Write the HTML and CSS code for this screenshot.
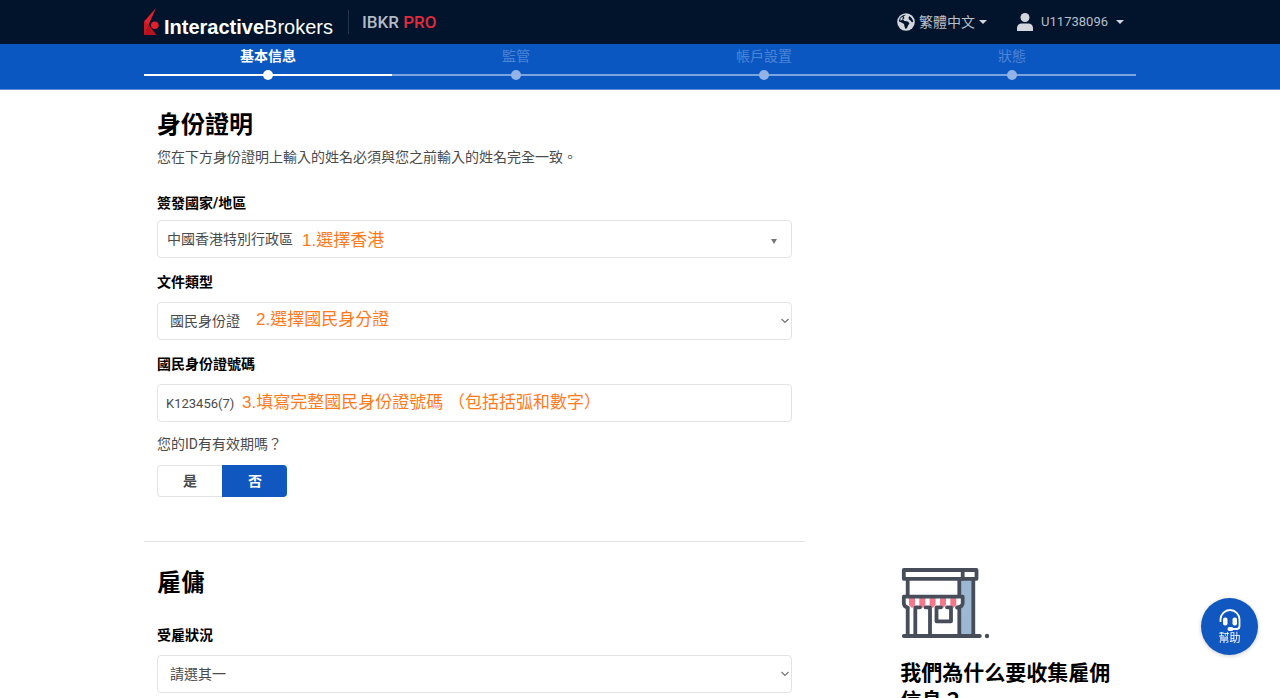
FILE: index.html
```html
<!DOCTYPE html>
<html lang="zh-Hant">
<head>
<meta charset="utf-8">
<title>InteractiveBrokers</title>
<link rel="stylesheet" href="styles.css">
</head>
<body>
<header class="topbar">
  <div class="container topbar-row">
    <a class="brand" href="#">
      <svg class="brand-mark" viewBox="0 0 16 28" aria-hidden="true">
        <path d="M12 0L0 13.500V27L4.500 17z" fill="#e3202c"/>
        <path d="M0 27L5 17L12.500 27z" fill="#b8121e"/>
        <path d="M0 13.500L5 17L0 27z" fill="#cb1823"/>
        <circle cx="10.800" cy="17.200" r="3.800" fill="#e3202c"/>
      </svg>
      <span class="brand-name"><b>Interactive</b>Brokers</span>
    </a>
    <span class="product">IBKR <span class="product-tier">PRO</span></span>
    <nav class="tools">
      <button class="tool" type="button">
        <svg class="globe" viewBox="0 0 18 18" aria-hidden="true">
          <circle cx="9" cy="9" r="8.800" fill="#d3d6dc"/>
          <path d="M9 1.800L6.500 3.500L7.500 5L6 6.500L7.500 8L11 8.500L12.500 10.500L11 12.500L10 15L8.500 16L7.500 13.500L7 11L4.500 9.500L2 8.500C2 5 5 1.800 9 1.800z" fill="#01142c"/>
          <path d="M12.500 3L15 5.500L16.300 8.500L15 9.500L13.500 7.500L12 6.500L11.500 4.500z" fill="#01142c"/>
          <path d="M3.500 5L6 3.800L5.500 6.500L3.500 8z" fill="#d3d6dc"/>
        </svg>
        <span>繁體中文</span><span class="caret"></span>
      </button>
      <button class="tool tool-user" type="button">
        <svg class="user" viewBox="0 0 16 18" aria-hidden="true">
          <circle cx="8" cy="4.500" r="4.500" fill="#d3d6dc"/>
          <path d="M0 18V15C0 12 2 10.500 4.500 10.500H11.500C14 10.500 16 12 16 15V18z" fill="#d3d6dc"/>
        </svg>
        <span class="account">U11738096</span><span class="caret"></span>
      </button>
    </nav>
  </div>
</header>

<div class="progress">
  <ol class="container steps">
    <li class="step step-active"><span>基本信息</span></li>
    <li class="step"><span>監管</span></li>
    <li class="step"><span>帳戶設置</span></li>
    <li class="step"><span>狀態</span></li>
  </ol>
</div>

<main class="container">
  <section class="block">
    <div class="form">
      <h2 class="title">身份證明</h2>
      <p class="intro">您在下方身份證明上輸入的姓名必須與您之前輸入的姓名完全一致。</p>

      <label class="label label-first" for="country">簽發國家/地區</label>
      <div class="field field-tight">
        <select class="control control-search" id="country"><option>中國香港特別行政區</option></select>
        <span class="note note-country">1.選擇香港</span>
        <svg class="triangle" viewBox="0 0 6 5" aria-hidden="true"><path d="M0 0H6L3 5z" fill="#777"/></svg>
      </div>

      <label class="label" for="doctype">文件類型</label>
      <div class="field">
        <select class="control control-select" id="doctype"><option>國民身份證</option></select>
        <span class="note note-doctype">2.選擇國民身分證</span>
        <svg class="chevron" viewBox="0 0 8 6" aria-hidden="true"><path d="M.5 1L4 4.500L7.500 1" fill="none" stroke="#777" stroke-width="1.200"/></svg>
      </div>

      <label class="label" for="idnum">國民身份證號碼</label>
      <div class="field">
        <input class="control control-text" id="idnum" type="text" value="K123456(7)">
        <span class="note note-idnum">3.填寫完整國民身份證號碼 （包括括弧和數字）</span>
      </div>

      <p class="question" id="expiry">您的ID有有效期嗎？</p>
      <div class="toggle" role="group" aria-labelledby="expiry">
        <button class="choice" type="button">是</button>
        <button class="choice choice-on" type="button">否</button>
      </div>
    </div>
  </section>

  <section class="block">
    <div class="form form-next">
      <h2 class="title">雇傭</h2>
      <label class="label label-first" for="employment">受雇狀況</label>
      <div class="field">
        <select class="control control-select" id="employment"><option>請選其一</option></select>
        <svg class="chevron" viewBox="0 0 8 6" aria-hidden="true"><path d="M.5 1L4 4.500L7.500 1" fill="none" stroke="#777" stroke-width="1.200"/></svg>
      </div>
    </div>
    <aside class="why">
      <svg class="store" viewBox="0 0 90 72" aria-hidden="true">
        <rect x="61" y="13" width="11" height="55" fill="#9db8d2"/>
        <g fill="#f4778a">
          <path d="M9 31h6v7l-3 3l-3-3zM19.300 31h6v7l-3 3l-3-3zM29.600 31h6v7l-3 3l-3-3zM40 31h6v7l-3 3l-3-3zM50.300 31h6v7l-3 3l-3-3z"/>
        </g>
        <g fill="none" stroke="#474e59" stroke-width="3.800" stroke-linecap="round" stroke-linejoin="round">
          <rect x="3.800" y="3" width="72.700" height="8.800"/>
          <path d="M62.700 3v8.800M7.700 12v17M59.300 12v17M73.300 12v57M7.700 41v28M59.300 41v28M3.800 69h76"/>
          <path d="M7.700 40.500C5 40 3.800 38 3.800 36V29.700H62.700V36C62.700 38 61.500 40 57 40.500"/>
          <path d="M20 40.300H15.300V69M25.500 40.300H30V69M41 40.300H36.500V54.300H51V40.300H47"/>
        </g>
        <circle cx="87" cy="69" r="2.200" fill="#474e59"/>
      </svg>
      <h3 class="why-title">我們為什么要收集雇佣信息？</h3>
    </aside>
  </section>
</main>

<button class="help" type="button">
  <svg class="headset" viewBox="0 0 24 24" aria-hidden="true">
    <path d="M2.500 14V11.500A9.500 9.500 0 0 1 21.500 11.500V18Q21.500 21 18.500 21H13" fill="none" stroke="#fff" stroke-width="1.800"/>
    <rect x="5" y="9.500" width="4.500" height="8" rx="2" fill="#fff"/>
    <rect x="14.500" y="9.500" width="4.500" height="8" rx="2" fill="#fff"/>
    <rect x="9.500" y="19" width="6" height="4" rx="2" fill="#fff"/>
  </svg>
  <span>幫助</span>
</button>
</body>
</html>
```

FILE: styles.css
```css
* {
  box-sizing: border-box;
}

body {
  margin: 0;
  background: #fff;
  color: #4a4a4a;
  font: 14px/20px Roboto, "Noto Sans CJK TC", sans-serif;
}

h2, h3, p, ol {
  margin: 0;
  padding: 0;
}

button, select, input {
  font: inherit;
  color: inherit;
}

.container {
  width: 100%;
  max-width: 992px;
  margin: 0 auto;
}

/* Top bar */
.topbar {
  background: #01142c;
}

.topbar-row {
  display: flex;
  align-items: center;
  height: 44px;
}

.brand {
  display: flex;
  align-items: center;
  gap: 4px;
  color: #fff;
  text-decoration: none;
}

.brand-mark {
  width: 16px;
  height: 28px;
}

.brand-name {
  padding-top: 9px;
  font: 20px/24px "Liberation Sans", Arial, sans-serif;
}

.product {
  margin-left: 15px;
  padding-left: 13px;
  border-left: 1px solid #23334a;
  color: #b4bac4;
  font-size: 17px;
  font-weight: 500;
  line-height: 24px;
}

.product-tier {
  color: #e22a3d;
}

.tools {
  display: flex;
  gap: 30px;
  margin-left: auto;
  padding-right: 12px;
}

.tool {
  display: flex;
  align-items: center;
  gap: 4px;
  padding: 0;
  border: 0;
  background: none;
  color: #b9bfc9;
}

.tool-user {
  gap: 8px;
}

.globe {
  width: 18px;
  height: 18px;
}

.user {
  width: 16px;
  height: 18px;
}

.account {
  font-size: 13px;
}

.caret {
  border: 4px solid transparent;
  border-top-color: #d3d6dc;
  border-bottom: 0;
}

/* Progress steps */
.progress {
  background: #0b57c2;
  border-bottom: 1px solid #5c8dd6;
}

.steps {
  display: grid;
  grid-template-columns: repeat(4, 1fr);
  height: 45px;
  list-style: none;
}

.step {
  position: relative;
  height: 32px;
  padding-top: 2px;
  border-bottom: 2px solid #7ba3de;
  color: #4d84d4;
  text-align: center;
}

.step::after {
  content: "";
  position: absolute;
  bottom: -6px;
  left: 50%;
  width: 10px;
  height: 10px;
  margin-left: -5px;
  border-radius: 50%;
  background: #93b3e6;
}

.step-active {
  border-color: #fff;
  color: #fff;
  font-weight: 700;
}

.step-active::after {
  background: #fff;
}

/* Form */
.block {
  display: grid;
  grid-template-columns: 2fr 1fr;
}

.form {
  padding: 19px 13px 44px;
}

.form-next {
  padding-top: 25px;
  border-top: 1px solid #e3e3e3;
}

.title {
  color: #000;
  font-size: 24px;
  font-weight: 700;
  line-height: 32px;
}

.intro {
  margin-top: 6px;
}

.label {
  display: block;
  margin-top: 14px;
  color: #000;
  font-weight: 700;
}

.label-first {
  margin-top: 26px;
}

.field {
  position: relative;
  margin-top: 10px;
}

.field-tight {
  margin-top: 7px;
}

.control {
  display: block;
  width: 100%;
  height: 38px;
  border: 1px solid #e3e3e3;
  border-radius: 4px;
  background: #fff;
  appearance: none;
}

.control-search {
  padding: 0 9px;
}

.control-select {
  padding: 0 12px;
}

.control-text {
  padding: 0 8px;
  font-size: 13px;
}

.note {
  position: absolute;
  top: 7px;
  color: #ff7a1a;
  font: 17px/24px "Liberation Sans", "Noto Sans CJK TC", sans-serif;
  white-space: nowrap;
  pointer-events: none;
}

.note-country {
  top: 9px;
  left: 145px;
}

.note-doctype {
  top: 6px;
  left: 99px;
}

.note-idnum {
  left: 85px;
}

.triangle {
  position: absolute;
  top: 19px;
  right: 15px;
  width: 6px;
  height: 5px;
}

.chevron {
  position: absolute;
  top: 16px;
  right: 3px;
  width: 8px;
  height: 6px;
}

.question {
  margin-top: 12px;
}

.toggle {
  display: inline-flex;
  margin-top: 11px;
  vertical-align: top;
}

.choice {
  width: 65px;
  height: 32px;
  padding: 0;
  border: 1px solid #e3e3e3;
  border-right: 0;
  border-radius: 4px 0 0 4px;
  background: #fff;
  font-weight: 700;
}

.choice-on {
  border-color: #1157c0;
  border-radius: 0 4px 4px 0;
  background: #1157c0;
  color: #fff;
}

/* Side note */
.why {
  padding: 26px 14px 0 95px;
}

.store {
  display: block;
  width: 90px;
  height: 72px;
}

.why-title {
  margin-top: 20px;
  color: #000;
  font-size: 21px;
  font-weight: 700;
  line-height: 28px;
}

/* Help bubble */
.help {
  position: fixed;
  right: 22px;
  bottom: 43px;
  display: flex;
  flex-direction: column;
  align-items: center;
  width: 57px;
  height: 57px;
  padding: 10px 0 0;
  border: 0;
  border-radius: 50%;
  background: #1157c0;
  box-shadow: 0 1px 4px rgba(0, 0, 0, .2);
  color: #fff;
  font-size: 11px;
  line-height: 14px;
}

.headset {
  width: 24px;
  height: 24px;
}
```
